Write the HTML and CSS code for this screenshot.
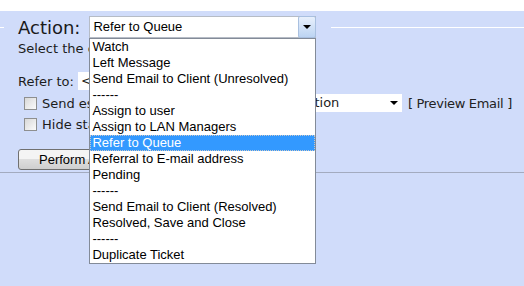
FILE: index.html
```html
<!DOCTYPE html>
<html lang="en">
<head>
  <meta charset="UTF-8" />
  <title>Ticket Action</title>
  <link rel="stylesheet" href="styles.css">
</head>
<body>
  <div class="topbar"></div>
  <div class="panel">
    <fieldset class="action-box">
      <legend class="action-legend">
        <span class="action-title">Action:</span>
        <span class="combo">
          <span class="combo-field">
            <span class="combo-value">Refer to Queue</span>
            <span class="combo-btn"><span class="arrow"></span></span>
          </span>
          <ul class="combo-list">
            <li>Watch</li>
            <li>Left Message</li>
            <li>Send Email to Client (Unresolved)</li>
            <li>------</li>
            <li>Assign to user</li>
            <li>Assign to LAN Managers</li>
            <li class="selected">Refer to Queue</li>
            <li>Referral to E-mail address</li>
            <li>Pending</li>
            <li>------</li>
            <li>Send Email to Client (Resolved)</li>
            <li>Resolved, Save and Close</li>
            <li>------</li>
            <li>Duplicate Ticket</li>
          </ul>
        </span>
      </legend>

      <p class="hint">Select the correct queue below.</p>

      <div class="row refer-row">
        <label>Refer to:</label>
        <div class="plain-select">&lt;Select a Queue&gt;</div>
      </div>

      <div class="row check-row">
        <input type="checkbox" class="check">
        <span class="send-label">Send escalation notice:</span>
        <div class="plain-select wide">
          <span>Client Notification</span>
          <span class="down"></span>
        </div>
        <a href="#" class="preview">[ Preview Email ]</a>
      </div>

      <div class="row check-row second">
        <input type="checkbox" class="check">
        <span>Hide status change from client</span>
      </div>

      <button class="perform">Perform Action</button>
    </fieldset>
  </div>
</body>
</html>
```

FILE: styles.css
```css
body {
  margin: 0;
  background: #fff;
  font-family: 'DejaVu Sans', Verdana, sans-serif;
  font-size: 13px;
  color: #1c1c1c;
}

.topbar {
  height: 11px;
}

.panel {
  background: #d0dcfa;
  height: 275px;
  padding-top: 5px;
  box-sizing: border-box;
}

.action-box {
  margin: 0;
  padding: 0 12px 2px 18px;
  border: 0;
  border-top: 1px solid #fff;
  border-bottom: 1px solid #a3abbf;
  min-width: 0;
}

.action-legend {
  display: flex;
  align-items: center;
  margin-left: -14px;
  padding: 0 15px 0 14px;
}

.action-title {
  font-size: 18px;
  margin-right: 9px;
  color: #1a1a1a;
}

.combo {
  position: relative;
  display: block;
}

.combo-field {
  display: flex;
  width: 227px;
  height: 22px;
  box-sizing: border-box;
  border: 1px solid #b6bcc6;
  background: #fff;
}

.combo-value {
  flex: 1;
  padding-left: 3px;
  font: 13px 'Liberation Sans', Arial, sans-serif;
  line-height: 20px;
  color: #000;
}

.combo-btn {
  width: 16px;
  display: flex;
  align-items: center;
  justify-content: center;
  background: linear-gradient(#e8f0fc, #bcd4f2);
  border: 1px solid #a9c0e0;
  border-radius: 2px;
  margin: -1px -1px -1px 0;
}

.arrow {
  width: 0;
  height: 0;
  border-left: 4px solid transparent;
  border-right: 4px solid transparent;
  border-top: 4px solid #000;
}

.combo-list {
  position: absolute;
  left: 0;
  top: 22px;
  z-index: 2;
  width: 227px;
  box-sizing: border-box;
  margin: 0;
  padding: 0;
  list-style: none;
  background: #fff;
  border: 1px solid #838b98;
  font: 13px 'Liberation Sans', Arial, sans-serif;
  color: #000;
}

.combo-list li {
  height: 16px;
  line-height: 16px;
  padding-left: 2px;
  white-space: nowrap;
}

.combo-list li.selected {
  background: #3399ff;
  color: #fff;
  outline: 1px dotted #c8c8c8;
  outline-offset: -1px;
}

.hint {
  margin: 3px 0 0;
  line-height: 16px;
  white-space: nowrap;
}

.row {
  display: flex;
  align-items: center;
  height: 18px;
  white-space: nowrap;
}

.refer-row {
  margin-top: 15px;
}

.refer-row label {
  margin-right: 4px;
}

.plain-select {
  background: #fff;
  height: 18px;
  line-height: 18px;
  padding: 0 3px;
  width: 180px;
}

.check-row {
  margin-top: 4px;
}

.check-row.second {
  margin-top: 3px;
}

.check {
  appearance: none;
  flex: none;
  width: 13px;
  height: 13px;
  margin: 0 5px 0 6px;
  box-sizing: border-box;
  border: 1px solid #8e8f8f;
  background: linear-gradient(135deg, #d8d8d8, #fbfbfb);
}

.send-label {
  flex: none;
  width: 166px;
  overflow: hidden;
}

.plain-select.wide {
  flex: 1;
  min-width: 0;
  width: auto;
  overflow: hidden;
  margin-left: 10px;
  display: flex;
  align-items: center;
  justify-content: space-between;
  padding: 0 4px 0 5px;
}

.down {
  flex: none;
  width: 0;
  height: 0;
  border-left: 4px solid transparent;
  border-right: 4px solid transparent;
  border-top: 4px solid #000;
}

.preview {
  flex: none;
  margin-left: 6px;
  color: #222;
  text-decoration: none;
  letter-spacing: -0.3px;
}

.perform {
  display: block;
  margin-top: 16px;
  height: 21px;
  padding: 0 20px;
  border: 1px solid #707070;
  border-radius: 3px;
  background: linear-gradient(#f4f4f4 45%, #dedede 50%, #cfcfcf);
  font: 13px 'Liberation Sans', Arial, sans-serif;
  color: #000;
}
```
